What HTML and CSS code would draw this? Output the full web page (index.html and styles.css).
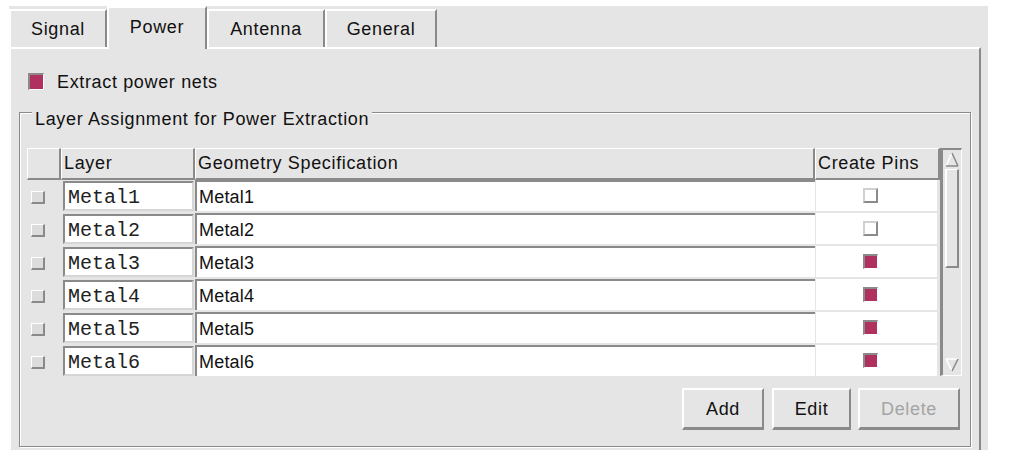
FILE: index.html
```html
<!DOCTYPE html>
<html>
<head>
<meta charset="utf-8">
<link rel="stylesheet" href="styles.css">
</head>
<body>
<div class="window">
  <div class="tabs">
    <div class="tab tab-signal">Signal</div>
    <div class="tab tab-power active">Power</div>
    <div class="tab tab-antenna">Antenna</div>
    <div class="tab tab-general">General</div>
  </div>
  <div class="panel">
    <div class="check-row"><span class="cb cb-on big"></span><span>Extract power nets</span></div>
    <div class="group">
      <div class="group-title">Layer Assignment for Power Extraction</div>
      <div class="table">
        <div class="grid">
          <div class="hdr">
            <div class="hcell"></div>
            <div class="hcell">Layer</div>
            <div class="hcell">Geometry Specification</div>
            <div class="hcell">Create Pins</div>
          </div>
          <div class="row"><div class="sel"><span class="mini"></span></div><div class="layer"><div class="field">Metal1</div></div><div class="geo">Metal1</div><div class="pin"><span class="cb cb-off"></span></div></div>
          <div class="row"><div class="sel"><span class="mini"></span></div><div class="layer"><div class="field">Metal2</div></div><div class="geo">Metal2</div><div class="pin"><span class="cb cb-off"></span></div></div>
          <div class="row"><div class="sel"><span class="mini"></span></div><div class="layer"><div class="field">Metal3</div></div><div class="geo">Metal3</div><div class="pin"><span class="cb cb-on"></span></div></div>
          <div class="row"><div class="sel"><span class="mini"></span></div><div class="layer"><div class="field">Metal4</div></div><div class="geo">Metal4</div><div class="pin"><span class="cb cb-on"></span></div></div>
          <div class="row"><div class="sel"><span class="mini"></span></div><div class="layer"><div class="field">Metal5</div></div><div class="geo">Metal5</div><div class="pin"><span class="cb cb-on"></span></div></div>
          <div class="row"><div class="sel"><span class="mini"></span></div><div class="layer"><div class="field">Metal6</div></div><div class="geo">Metal6</div><div class="pin"><span class="cb cb-on"></span></div></div>
        </div>
        <div class="scroll">
          <svg class="arrow" width="14" height="15" viewBox="0 0 14 15">
            <polygon points="7,1 13,14 1,14" fill="#e5e5e5"/>
            <line x1="1" y1="14" x2="7" y2="1" stroke="#ffffff" stroke-width="1.5"/>
            <line x1="7" y1="1" x2="13" y2="14" stroke="#8a8a8a" stroke-width="1.5"/>
            <line x1="1" y1="14" x2="13" y2="14" stroke="#8a8a8a" stroke-width="1.5"/>
          </svg>
          <div class="slider"></div>
          <div class="trough-fill"></div>
          <svg class="arrow" width="14" height="14" viewBox="0 0 14 14">
            <polygon points="1,1 13,1 7,13" fill="#e5e5e5"/>
            <line x1="1" y1="1" x2="13" y2="1" stroke="#ffffff" stroke-width="1.5"/>
            <line x1="1" y1="1" x2="7" y2="13" stroke="#ffffff" stroke-width="1.5"/>
            <line x1="13" y1="1" x2="7" y2="13" stroke="#8a8a8a" stroke-width="1.5"/>
          </svg>
        </div>
      </div>
      <div class="buttons">
        <div class="btn btn-add">Add</div>
        <div class="btn btn-edit">Edit</div>
        <div class="btn btn-delete disabled">Delete</div>
      </div>
    </div>
  </div>
</div>
</body>
</html>
```

FILE: styles.css
```css
* { box-sizing: border-box; margin: 0; padding: 0; }
body {
  background: #ffffff;
  font-family: "Liberation Sans", Arial, sans-serif;
  font-size: 18px;
  letter-spacing: 0.65px;
  color: #111111;
}
.window {
  margin: 6px 0 0 9px;
  width: 979px;
  height: 444px;
  background: #e5e5e5;
  overflow: hidden;
}
.tabs {
  display: flex;
  align-items: flex-start;
  height: 41px;
  position: relative;
  z-index: 1;
}
.tab {
  height: 38px;
  margin-top: 3px;
  border-top: 2px solid #ffffff;
  border-left: 2px solid #ffffff;
  border-right: 2px solid #8a8a8a;
  background: #e5e5e5;
  display: flex;
  align-items: center;
  justify-content: center;
  padding-top: 1px;
}
.tab-signal { width: 98px; }
.tab-power { width: 100px; }
.tab-antenna { width: 118px; }
.tab-general { width: 112px; }
.tab.active {
  height: 43px;
  margin-top: 0;
  padding-top: 0;
  padding-bottom: 3px;
}
.panel {
  width: 972px;
  height: 420px;
  border-top: 2px solid #ffffff;
  border-left: 2px solid #ffffff;
  border-right: 2px solid #8a8a8a;
  padding: 25px 8px 0 8px;
}
.check-row {
  display: flex;
  align-items: center;
  gap: 13px;
  margin-left: 9px;
  height: 16px;
  line-height: 16px;
}
.cb {
  display: block;
  width: 15px;
  height: 15px;
}
.cb.big { width: 16px; height: 17px; margin-top: -1px; }
.cb-on {
  background: #b03060;
  border-top: 2px solid #8a8a8a;
  border-left: 2px solid #8a8a8a;
  border-right: 1px solid #ffffff;
  border-bottom: 1px solid #ffffff;
}
.cb-off {
  background: #ffffff;
  border-top: 2px solid #d0d0d0;
  border-left: 2px solid #d0d0d0;
  border-right: 2px solid #8a8a8a;
  border-bottom: 2px solid #8a8a8a;
}
.group {
  position: relative;
  margin-top: 22px;
  width: 952px;
  height: 335px;
  border: 1px solid #8a8a8a;
  box-shadow: inset 1px 1px 0 #ffffff, 1px 1px 0 #ffffff;
  padding: 35px 7px 16px 7px;
}
.group-title {
  position: absolute;
  top: -4px;
  left: 12px;
  padding: 0 3px;
  line-height: 20px;
  background: #e5e5e5;
}
.table {
  display: flex;
  width: 935px;
  height: 228px;
}
.grid {
  width: 913px;
  height: 228px;
  overflow: hidden;
}
.hdr, .row {
  display: grid;
  grid-template-columns: 34px 134px 620px 125px;
}
.hdr { height: 32px; }
.row { height: 33px; }
.hcell {
  border-top: 1px solid #ffffff;
  border-left: 1px solid #ffffff;
  border-right: 2px solid #8a8a8a;
  border-bottom: 2px solid #8a8a8a;
  padding-left: 2px;
  line-height: 28px;
  white-space: nowrap;
}
.sel {
  display: flex;
  align-items: flex-start;
  padding: 11px 0 0 4px;
}
.mini {
  display: block;
  width: 14px;
  height: 13px;
  background: #dcdcdc;
  border-top: 1px solid #ffffff;
  border-left: 1px solid #ffffff;
  border-right: 2px solid #8a8a8a;
  border-bottom: 2px solid #8a8a8a;
}
.layer { padding: 1px 1px 3px 2px; }
.field {
  height: 100%;
  background: #ffffff;
  border-top: 2px solid #8a8a8a;
  border-left: 2px solid #8a8a8a;
  border-right: 2px solid #d6d6d6;
  border-bottom: 2px solid #d6d6d6;
  font-family: "Liberation Mono", "Courier New", monospace;
  font-size: 20px;
  letter-spacing: 0;
  line-height: 23px;
  padding: 3px 0 0 3px;
  color: #222222;
}
.geo {
  background: #ffffff;
  border-top: 2px solid #8a8a8a;
  border-left: 2px solid #8a8a8a;
  margin-bottom: 3px;
  padding: 5px 0 0 2px;
  line-height: 20px;
  letter-spacing: 0.2px;
}
.pin {
  background: #ffffff;
  margin: 0 3px 3px 1px;
  padding: 8px 0 0 47px;
}
.scroll {
  width: 22px;
  height: 228px;
  border-top: 2px solid #8a8a8a;
  border-left: 3px solid #8a8a8a;
  border-right: 1px solid #ffffff;
  border-bottom: 1px solid #ffffff;
  padding: 2px 2px 3px 2px;
  display: flex;
  flex-direction: column;
}
.arrow { display: block; flex: none; }
.slider {
  margin-top: 2px;
  height: 99px;
  flex: none;
  border-top: 1px solid #ffffff;
  border-left: 2px solid #ffffff;
  border-right: 2px solid #8a8a8a;
  border-bottom: 2px solid #8a8a8a;
}
.trough-fill { flex: 1; }
.buttons {
  display: flex;
  justify-content: flex-end;
  gap: 7px;
  margin-top: 12px;
  padding-right: 2px;
  height: 42px;
  width: 935px;
}
.btn {
  display: flex;
  align-items: center;
  justify-content: center;
  border-top: 2px solid #ffffff;
  border-left: 2px solid #ffffff;
  border-right: 2px solid #8a8a8a;
  border-bottom: 3px solid #8a8a8a;
  padding-top: 1px;
}
.btn-add { width: 82px; margin-right: 1px; }
.btn-edit { width: 79px; }
.btn-delete { width: 102px; }
.disabled { color: #a4a4a4; }
```
